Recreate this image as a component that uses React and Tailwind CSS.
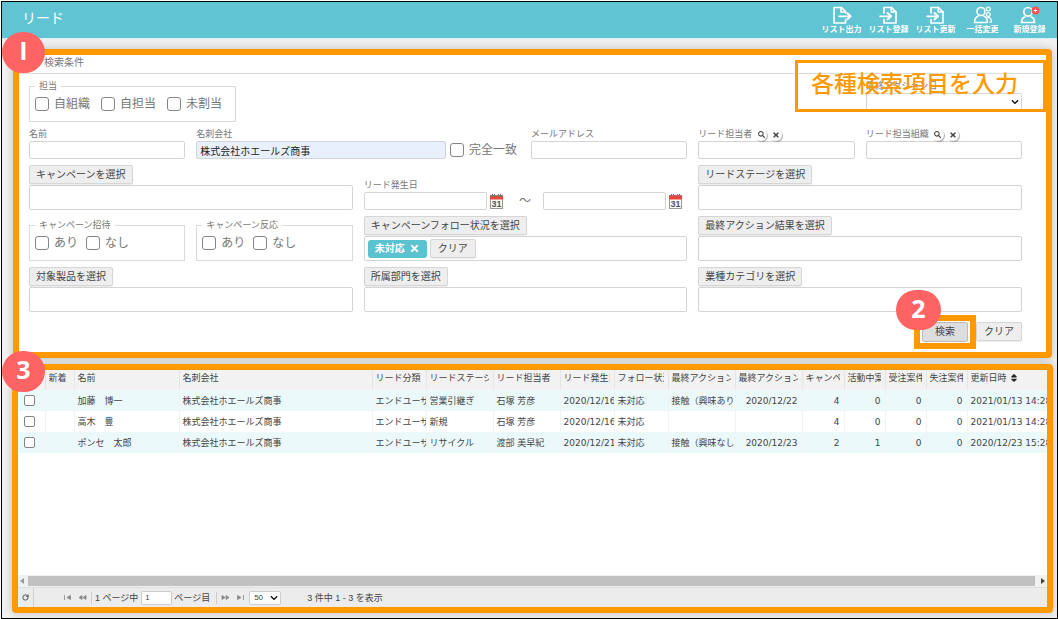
import React from "react";
import { FaSearch, FaTimes, FaChevronDown, FaSort } from "react-icons/fa";
import { RotateCw } from "lucide-react";

const fieldBox = "block h-[18px] w-full min-w-0 rounded-xs border border-[#d4d4d4] bg-white px-1 text-[10px] leading-4 text-[#333]";
const grayButton = "h-[19px] rounded-xs border border-[#d6d6d6] bg-[#eeeeee] px-1.5 text-[10px] leading-4 text-[#444] whitespace-nowrap shadow-[0_1px_1px_rgba(0,0,0,0.08)]";
const caption = "block h-[13px] text-[9px] leading-[13px] text-[#777] whitespace-nowrap";

function FileIcon({ inward }) {
  return (
    <svg viewBox="0 0 20 18" className="h-[18px] w-5" fill="none" stroke="white" strokeWidth="1.7" strokeLinejoin="round" strokeLinecap="round">
      {inward ? (
        <>
          <path d="M5 7V1.5h7.5L17 6v11H5v-3.5" />
          <path d="M12.3 1.5V6H17" />
          <path d="M1 10.3h10" />
          <path d="M8.5 7l3.6 3.3-3.6 3.3" strokeWidth="2" />
        </>
      ) : (
        <>
          <path d="M13.5 7V5.5L9.5 1.5H2V17h11.5v-3" />
          <path d="M9 1.5V6h4.5" />
          <path d="M7 10.3h11" />
          <path d="M15.3 7.3l3.3 3-3.3 3" strokeWidth="2" />
        </>
      )}
    </svg>
  );
}

function PeopleIcon() {
  return (
    <svg viewBox="0 0 20 18" className="h-[18px] w-5" fill="none" stroke="white" strokeWidth="1.6" strokeLinejoin="round">
      <circle cx="8" cy="5.5" r="4" />
      <path d="M5.5 10C3 10.7 1.6 12.8 1.6 16.5h12.8c0-3.700-1.300-5.800-4-6.500" />
      <circle cx="15.300" cy="3" r="1.900" strokeWidth="1.200" />
      <circle cx="15.300" cy="8.500" r="1.900" strokeWidth="1.200" />
      <path d="M14 11.500c2.500-.4 4.500.8 4.500 4.500h-2.500" strokeWidth="1.200" />
    </svg>
  );
}

function AddPersonIcon() {
  return (
    <svg viewBox="0 0 20 18" className="h-[18px] w-5" fill="none" stroke="white" strokeWidth="1.7" strokeLinejoin="round">
      <circle cx="8" cy="5.800" r="4.300" />
      <path d="M5.300 10.800C2.800 11.300 1.500 13 1.500 16.500h13c0-3.500-1.300-5.200-3.800-5.700" />
      <circle cx="15.500" cy="4.500" r="3.900" fill="#ff5050" stroke="none" />
      <path d="M13.700 4.500h3.600M15.500 2.700v3.600" strokeWidth="1" />
    </svg>
  );
}

function CalendarButton({ label }) {
  return (
    <button type="button" aria-label={label} className="h-[15px] w-[13px] shrink-0">
      <svg viewBox="0 0 13 15" className="h-[15px] w-[13px]">
        <rect x="0.500" y="1.500" width="12" height="13" fill="#fafafa" stroke="#999" />
        <rect x="0" y="1.500" width="13" height="4" fill="#e5463c" />
        <path d="M2.500 0v3M4.500 0v3M8.500 0v3M10.500 0v3" stroke="#777" strokeWidth="1" />
        <text x="6.500" y="13" textAnchor="middle" fontSize="9" fontWeight="bold" fontFamily="Liberation Sans" fill="#555">31</text>
      </svg>
    </button>
  );
}

function Check({ label }) {
  return (
    <label className="flex h-[14px] items-center gap-[5px] text-[12px] leading-[14px] whitespace-nowrap text-[#777]">
      <input type="checkbox" className="size-[14px] shrink-0 appearance-none rounded-[3px] border border-[#858585] bg-white" />
      {label}
    </label>
  );
}

function CheckGroup({ title, items, wide }) {
  return (
    <fieldset className={wide ? "col-span-2 w-fit border border-[#dadada] pr-[13px]" : "self-end border border-[#dadada]"}>
      <legend className="ml-[5px] h-3 px-1 text-[9px] leading-3 text-[#777]">{title}</legend>
      <div className={wide ? "flex gap-[11px] pt-[5px] pb-2.5 pl-[5px]" : "flex gap-2 pt-[5px] pb-2.5 pl-[5px]"}>
        {items.map((t) => <Check key={t} label={t} />)}
      </div>
    </fieldset>
  );
}

function Picker({ label, children }) {
  return (
    <div className="col-span-2 flex flex-col items-start gap-px">
      <button type="button" className={grayButton}>{label}</button>
      <div className="flex h-[25px] w-full items-center gap-[3px] rounded-xs border border-[#d4d4d4] bg-white px-[3px]">{children}</div>
    </div>
  );
}

function OwnerField({ id, label }) {
  const round = "flex size-3 items-center justify-center rounded-full bg-white text-[#444] shadow-[1px_1px_1px_rgba(0,0,0,0.3)]";
  return (
    <div>
      <div className="flex h-[13px] items-center gap-[3px]">
        <label htmlFor={id} className={caption}>{label}</label>
        <button type="button" aria-label={label + "を検索"} className={round}><FaSearch size={7} /></button>
        <button type="button" aria-label={label + "を消去"} className={round}><FaTimes size={8} /></button>
      </div>
      <input id={id} className={fieldBox} />
    </div>
  );
}

function Step({ children, className }) {
  return (
    <span className={"absolute z-20 flex items-start justify-center rounded-full bg-[#ff6464] font-['Open_Sans',sans-serif] text-[25px] leading-9 font-bold text-white " + className}>
      {children}
    </span>
  );
}

const tools = [
  ["リスト出力", <FileIcon />],
  ["リスト登録", <FileIcon inward />],
  ["リスト更新", <FileIcon inward />],
  ["一括変更", <PeopleIcon />],
  ["新規登録", <AddPersonIcon />],
];

const columns = [
  ["", "w-[27px]"],
  ["新着", "w-[29px]"],
  ["名前", "w-[105px]"],
  ["名刺会社", "w-[193px]"],
  ["リード分類", "w-[54px]"],
  ["リードステージ", "w-[67px]"],
  ["リード担当者", "w-[67px]"],
  ["リード発生日", "w-[54px]"],
  ["フォロー状況", "w-[54px]"],
  ["最終アクション結果", "w-[67px]"],
  ["最終アクション日", "w-[67px]"],
  ["キャンペーン", "w-[42px]"],
  ["活動中案件", "w-[41px]"],
  ["受注案件", "w-[41px]"],
  ["失注案件", "w-[41px]"],
  ["更新日時", ""],
];

const rows = [
  ["", "加藤　博一", "株式会社ホエールズ商事", "エンドユーザ", "営業引継ぎ", "石塚 芳彦", "2020/12/16", "未対応", "接触（興味あり）", "2020/12/22", "4", "0", "0", "0", "2021/01/13 14:28"],
  ["", "高木　豊", "株式会社ホエールズ商事", "エンドユーザ", "新規", "石塚 芳彦", "2020/12/16", "未対応", "", "", "4", "0", "0", "0", "2021/01/13 14:28"],
  ["", "ポンセ　太郎", "株式会社ホエールズ商事", "エンドユーザ", "リサイクル", "渡部 美早紀", "2020/12/21", "未対応", "接触（興味なし）", "2020/12/23", "2", "1", "0", "0", "2020/12/23 15:28"],
];

function PageArrow({ label, d }) {
  return (
    <button type="button" aria-label={label} className="flex h-4 w-[9px] items-center justify-center">
      <svg viewBox="0 0 9 5" className="h-[5px] w-[9px]" fill="#888" stroke="#888" strokeWidth="0.800"><path d={d} /></svg>
    </button>
  );
}

export default function App() {
  return (
    <div className="flex min-h-screen flex-col bg-white pt-px pl-px font-['DejaVu_Sans','Noto_Sans_CJK_JP',sans-serif]">
      <div className="flex flex-1 flex-col overflow-hidden border border-black bg-[#f0f0f0]">
        <header className="flex h-[37px] items-center justify-between border-b border-[#d8f0f4] bg-[#60c4d2] pr-1 pl-5 text-white">
          <h1 className="mb-1 text-[14px] leading-5">リード</h1>
          <nav className="flex">
            {tools.map(([label, icon]) => (
              <button key={label} type="button" className="flex w-[47px] flex-col items-center pt-px text-[8px] leading-3 font-bold whitespace-nowrap">
                {icon}
                {label}
              </button>
            ))}
          </nav>
        </header>

        <section className="relative mt-2.5 mr-[5px] ml-[11px] rounded-sm border-6 border-[#ff9900] bg-white shadow-[0_0_8px_rgba(0,0,0,0.2)]">
          <Step className="-top-[23px] -left-[17px] h-[41px] w-[43px]">I</Step>
          <h2 className="h-[19px] border-b border-[#dcdcdc] pl-[25px] text-[10px] leading-4 text-[#777]">検索条件</h2>
          <form className="pt-1.5 pr-6 pb-2.5 pl-2.5" onSubmit={(e) => e.preventDefault()}>
            <div className="grid grid-cols-6 gap-x-[11px] gap-y-1.5">
              <CheckGroup title="担当" items={["自組織", "自担当", "未割当"]} wide />
              <div className="col-start-6">
                <label htmlFor="last-action" className={caption}>最終アクション日</label>
                <div className="grid items-center">
                  <select id="last-action" className={"col-start-1 row-start-1 appearance-none " + fieldBox}><option></option></select>
                  <FaChevronDown size={8} className="pointer-events-none col-start-1 row-start-1 mr-[3px] justify-self-end text-black" />
                </div>
              </div>

              <div>
                <label htmlFor="name" className={caption}>名前</label>
                <input id="name" className={fieldBox} />
              </div>
              <div className="col-span-2">
                <label htmlFor="company" className={caption}>名刺会社</label>
                <div className="flex items-center gap-1 pr-[3px]">
                  <input id="company" defaultValue="株式会社ホエールズ商事" className="h-[18px] min-w-0 flex-1 rounded-xs border border-[#d0d4dc] bg-[#e8f0fe] px-[3px] text-[10px] leading-4 text-[#222]" />
                  <Check label="完全一致" />
                </div>
              </div>
              <div>
                <label htmlFor="mail" className={caption}>メールアドレス</label>
                <input id="mail" className={fieldBox} />
              </div>
              <OwnerField id="owner" label="リード担当者" />
              <OwnerField id="owner-org" label="リード担当組織" />

              <Picker label="キャンペーンを選択" />
              <div className="col-span-2 self-end">
                <label htmlFor="from" className={caption}>リード発生日</label>
                <div className="flex items-center gap-[3px] pr-[5px]">
                  <input id="from" className={fieldBox + " flex-1"} />
                  <CalendarButton label="開始日を選択" />
                  <span className="w-[34px] shrink-0 pl-1 text-center text-[12px] leading-4 text-[#777]">～</span>
                  <input aria-label="終了日" className={fieldBox + " flex-1"} />
                  <CalendarButton label="終了日を選択" />
                </div>
              </div>
              <Picker label="リードステージを選択" />

              <CheckGroup title="キャンペーン招待" items={["あり", "なし"]} />
              <CheckGroup title="キャンペーン反応" items={["あり", "なし"]} />
              <Picker label="キャンペーンフォロー状況を選択">
                <button type="button" className="flex h-[18px] items-center gap-1 rounded-[3px] bg-[#5bc2d0] px-[7px] text-[10px] leading-4 font-bold text-white">
                  未対応<FaTimes size={11} />
                </button>
                <button type="button" className={grayButton + " w-[46px]"}>クリア</button>
              </Picker>
              <Picker label="最終アクション結果を選択" />

              <Picker label="対象製品を選択" />
              <Picker label="所属部門を選択" />
              <Picker label="業種カテゴリを選択" />
            </div>
            <div className="mt-2.5 flex justify-end gap-2">
              <div className="relative flex">
                <button type="submit" className="h-5 w-[46px] rounded-xs border border-[#bbb] bg-[#dddddd] text-[10px] leading-4 text-[#444]">検索</button>
                <span className="pointer-events-none absolute -inset-x-2 -inset-y-[7px] border-6 border-[#ff9900]" />
                <Step className="-top-8 -left-[26px] h-10 w-[45px]">2</Step>
              </div>
              <button type="reset" className={grayButton + " h-5 w-[46px]"}>クリア</button>
            </div>
          </form>
          <p className="pointer-events-none absolute top-[5px] right-0 z-10 h-[52px] w-[251px] border-3 border-[#ff9900] pl-[13px] font-['Noto_Sans_CJK_JP',sans-serif] text-[23px] leading-[38px] font-medium whitespace-nowrap text-[#ff9900]">
            各種検索項目を入力
          </p>
        </section>

        <section className="relative mt-1.5 mr-1 mb-[5px] ml-2.5 flex flex-1 flex-col rounded-sm border-6 border-[#ff9900] bg-white shadow-[0_0_8px_rgba(0,0,0,0.2)]">
          <Step className="-top-[19px] -left-4 h-[41px] w-[43px]">3</Step>
          <div className="flex-1 overflow-hidden">
            <table className="w-full table-fixed border-collapse text-left text-[9px] leading-3 whitespace-nowrap text-[#444]">
              <thead>
                <tr className="h-5 bg-[#f2f2f2]">
                  {columns.map(([title, width], i) => (
                    <th key={i} scope="col" className={"border-r border-[#e6e6e6] p-0 pr-1 pl-[3px] font-normal last:border-r-0 " + width}>
                      <div className="flex items-center overflow-hidden pb-1">
                        {title}
                        {i === 15 && <FaSort size={10} className="ml-0.5 shrink-0 text-[#222]" />}
                      </div>
                    </th>
                  ))}
                </tr>
              </thead>
              <tbody>
                {rows.map((row, r) => (
                  <tr key={r} className="h-[21px] odd:bg-[#ecf9fb]">
                    <td className="border-r border-[#f0f4f4] p-0">
                      <input type="checkbox" aria-label={row[1]} className="ml-1.5 block size-[11px] appearance-none rounded-xs border border-[#858585] bg-white" />
                    </td>
                    {row.map((value, c) => (
                      <td key={c} className={"overflow-hidden border-r border-[#f0f4f4] p-0 pl-[3px] last:border-r-0 " + (c >= 9 && c < 14 ? "pr-1 text-right" : "")}>{value}</td>
                    ))}
                  </tr>
                ))}
              </tbody>
            </table>
          </div>
          <div className="flex h-3 items-center justify-between bg-[#f1f1f1] px-0.5">
            <svg viewBox="0 0 4 6" className="h-1.5 w-1" fill="#999"><path d="M4 0v6L0 3z" /></svg>
            <div className="mr-1.5 ml-1 h-2.5 flex-1 bg-[#c1c1c1]" />
            <svg viewBox="0 0 4 6" className="h-1.5 w-1" fill="#444"><path d="M0 0v6l4-3z" /></svg>
          </div>
          <footer className="flex h-5 items-center border-t border-[#ddd] bg-[#ececec] font-['Liberation_Sans','Noto_Sans_CJK_JP',sans-serif] text-[9px] leading-3 whitespace-nowrap text-[#444]">
            <button type="button" aria-label="再読み込み" className="flex h-full w-4 items-center justify-center border-r border-[#d0d0d0]"><RotateCw size={7} strokeWidth={3} /></button>
            <div className="ml-[29px] flex items-center gap-1.5">
              <PageArrow label="最初のページ" d="M1.500 0v5M7.500 .5v4L4 2.500z" />
              <PageArrow label="前のページ" d="M4 .5v4L1 2.500zM8 .5v4L5 2.500z" />
            </div>
            <label htmlFor="page" className="ml-1 border-l border-[#ccc] pl-[3px]">1 ページ中</label>
            <input id="page" defaultValue="1" className="ml-[3px] h-[14px] w-[31px] rounded-xs border border-[#ccc] bg-white px-[3px] text-[8px]" />
            <span className="ml-0.5 border-r border-[#ccc] pr-1.5">ページ目</span>
            <div className="ml-1 flex items-center gap-1.5">
              <PageArrow label="次のページ" d="M1 .5v4l3-2zM5 .5v4l3-2z" />
              <PageArrow label="最後のページ" d="M1.500 .5v4L5 2.500zM7.500 0v5" />
            </div>
            <div className="ml-1 grid w-8 items-center">
              <select aria-label="表示件数" className="col-start-1 row-start-1 h-[14px] appearance-none rounded-xs border border-[#ccc] bg-white pl-1 text-[8px] leading-3"><option>50</option></select>
              <FaChevronDown size={8} className="pointer-events-none col-start-1 row-start-1 mr-[3px] justify-self-end text-black" />
            </div>
            <p className="ml-[26px]">3 件中 1 - 3 を表示</p>
          </footer>
        </section>
      </div>
    </div>
  );
}
